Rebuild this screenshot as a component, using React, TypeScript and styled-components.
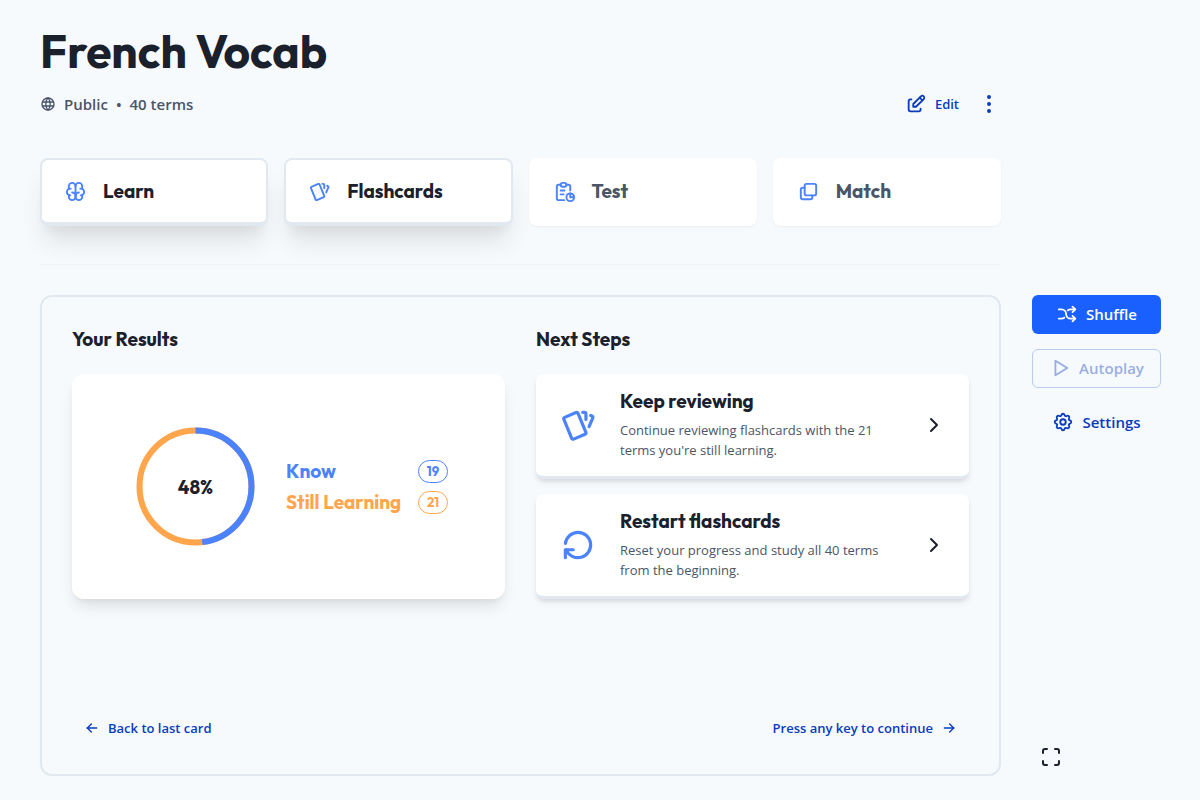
import React from "react";
import styled, { createGlobalStyle, css } from "styled-components";
import {
  TbArrowLeft,
  TbArrowRight,
  TbArrowsShuffle,
  TbBrain,
  TbCards,
  TbChevronRight,
  TbDotsVertical,
  TbEdit,
  TbLayersSubtract,
  TbMaximize,
  TbPlayerPlay,
  TbReload,
  TbReport,
  TbSettings,
  TbWorld,
} from "react-icons/tb";

const color = {
  page: "#f7fafd",
  ink: "#1a202c",
  muted: "#4a5568",
  line: "#e2e8f0",
  blue: "#4b83ff",
  solid: "#1a5fff",
  link: "#0a3bbd",
  orange: "#ffa54c",
};

const heading = `Outfit, Lato, "Open Sans", sans-serif`;

const GlobalStyle = createGlobalStyle`
  *, *::before, *::after { box-sizing: border-box; }
  body {
    margin: 0;
    background: ${color.page};
    color: ${color.ink};
    font-family: "Open Sans", "Noto Sans", sans-serif;
    font-size: 13px;
    line-height: 20px;
  }
  h1, h2, h3, p, dl, dd, dt { margin: 0; }
  button { font: inherit; cursor: pointer; }
  a { color: inherit; text-decoration: none; }
  svg { display: block; flex: none; }
`;

const Page = styled.main`
  display: grid;
  grid-template-columns: minmax(0, 1fr) 129px;
  column-gap: 31px;
  padding: 22px 39px 24px 40px;
`;

const Header = styled.header`
  grid-column: 1;
`;

const Title = styled.h1`
  font: 700 46px/58px ${heading};
`;

const MetaRow = styled.div`
  display: flex;
  align-items: center;
  justify-content: space-between;
  height: 38px;
  margin-top: 5px;
`;

const Meta = styled.div`
  display: flex;
  align-items: center;
  gap: 8px;
  color: ${color.muted};
  font-size: 15px;
  font-weight: 600;
`;

const Actions = styled.div`
  display: flex;
  align-items: center;
  gap: 6px;
`;

const TextButton = styled.button`
  display: flex;
  align-items: center;
  gap: 8px;
  height: 38px;
  padding: 0 12px;
  border: 0;
  background: none;
  color: ${color.link};
  font-size: 13px;
  font-weight: 600;
`;

const IconButton = styled.button<{ $dark?: boolean }>`
  display: grid;
  place-items: center;
  width: 38px;
  height: 38px;
  padding: 0;
  border: 0;
  background: none;
  color: ${(p) => (p.$dark ? color.ink : color.link)};
`;

const MoreButton = styled(IconButton)`
  width: 24px;
`;

const Modes = styled.nav`
  display: grid;
  grid-template-columns: repeat(4, minmax(0, 1fr));
  gap: 16px;
  margin-top: 35px;
  padding-bottom: 38px;
  border-bottom: 1px solid #f0f4f8;
`;

const ModeCard = styled.a<{ $active?: boolean }>`
  display: flex;
  align-items: center;
  gap: 16px;
  height: 68px;
  padding: 0 22px;
  border: 2px solid transparent;
  border-bottom-width: 4px;
  border-radius: 8px;
  background: #fff;
  color: ${color.muted};
  font: 700 19px/26px ${heading};
  box-shadow: 0 1px 2px rgba(0, 0, 0, 0.05);
  svg { color: ${color.blue}; }
  ${(p) =>
    p.$active &&
    css`
      border-color: ${color.line};
      color: ${color.ink};
      box-shadow: 0 20px 25px -5px rgba(0, 0, 0, 0.1), 0 10px 10px -5px rgba(0, 0, 0, 0.04);
    `}
`;

const Panel = styled.section`
  grid-column: 1;
  display: flex;
  flex-direction: column;
  min-height: 481px;
  margin-top: 30px;
  padding: 29px 30px 27px;
  border: 2px solid ${color.line};
  border-radius: 12px;
`;

const Columns = styled.div`
  display: grid;
  grid-template-columns: repeat(2, minmax(0, 1fr));
  gap: 31px;
`;

const Column = styled.div`
  display: flex;
  flex-direction: column;
  gap: 21px;
`;

const SectionTitle = styled.h2`
  font: 700 19px/27px ${heading};
`;

const ResultsCard = styled.div`
  display: flex;
  flex: 1;
  align-items: center;
  justify-content: center;
  gap: 31px;
  padding: 0 57px 0 64px;
  border-radius: 12px;
  background: #fff;
  box-shadow: 0 10px 15px -3px rgba(0, 0, 0, 0.1), 0 4px 6px -2px rgba(0, 0, 0, 0.05);
`;

const Ring = styled.div`
  display: grid;
  place-items: center;
  flex: none;
  > * { grid-area: 1 / 1; }
`;

const RingLabel = styled.span`
  font: 700 19px/24px ${heading};
`;

const Legend = styled.dl`
  display: grid;
  gap: 4px;
  width: 162px;
`;

const LegendRow = styled.div<{ $color: string }>`
  display: flex;
  align-items: center;
  justify-content: space-between;
  height: 27px;
  color: ${(p) => p.$color};
  font: 700 19px/26px ${heading};
  white-space: nowrap;
`;

const Badge = styled.dd`
  width: 30px;
  height: 23px;
  border: 1px solid currentColor;
  border-radius: 12px;
  font: 700 13px/20px ${heading};
  text-align: center;
`;

const Steps = styled.div`
  display: grid;
  gap: 15px;
`;

const StepCard = styled.a`
  display: flex;
  align-items: center;
  height: 105px;
  padding: 0 23px;
  border-bottom: 3px solid ${color.line};
  border-radius: 8px;
  background: #fff;
  box-shadow: 0 4px 6px -1px rgba(0, 0, 0, 0.1), 0 2px 4px -1px rgba(0, 0, 0, 0.06);
`;

const StepIcon = styled.span<{ $flip?: boolean }>`
  color: ${color.blue};
  transform: ${(p) => (p.$flip ? "rotate(180deg)" : "none")};
`;

const StepBody = styled.div`
  flex: 1;
  min-width: 0;
  padding: 0 16px 2px 23px;
`;

const StepTitle = styled.h3`
  font: 700 19px/26px ${heading};
`;

const StepText = styled.p`
  margin-top: 6px;
  color: ${color.muted};
`;

const PanelFooter = styled.div`
  display: flex;
  justify-content: space-between;
  margin-top: auto;
`;

const Side = styled.aside`
  grid-column: 2;
  display: flex;
  flex-direction: column;
  gap: 15px;
  padding-top: 30px;
`;

const SideButton = styled.button<{ $kind: "solid" | "outline" | "ghost" }>`
  display: flex;
  align-items: center;
  justify-content: center;
  gap: 8px;
  height: 39px;
  padding: 0 0 2px;
  border: 1px solid transparent;
  border-radius: 6px;
  background: none;
  color: ${color.link};
  font-size: 15px;
  font-weight: 600;
  ${(p) =>
    p.$kind === "solid" &&
    css`
      background: ${color.solid};
      color: #fff;
    `}
  ${(p) =>
    p.$kind === "outline" &&
    css`
      border-color: #6088e0;
      opacity: 0.4;
    `}
`;

const FullscreenButton = styled(IconButton)`
  margin-top: auto;
`;

const MODES = [
  { label: "Learn", icon: TbBrain, active: true },
  { label: "Flashcards", icon: TbCards, active: true },
  { label: "Test", icon: TbReport, active: false },
  { label: "Match", icon: TbLayersSubtract, active: false },
];

const STEPS = [
  {
    title: "Keep reviewing",
    text: "Continue reviewing flashcards with the 21 terms you're still learning.",
    icon: TbCards,
    flip: false,
  },
  {
    title: "Restart flashcards",
    text: "Reset your progress and study all 40 terms from the beginning.",
    icon: TbReload,
    flip: true,
  },
];

const RADIUS = 56;
const KNOWN = 0.48;

function ProgressRing() {
  const length = 2 * Math.PI * RADIUS;
  return (
    <Ring>
      <svg width="119" height="119" viewBox="0 0 119 119" fill="none" strokeWidth="6" aria-hidden="true">
        <circle cx="59.5" cy="59.5" r={RADIUS} stroke={color.orange} />
        <circle
          cx="59.5"
          cy="59.5"
          r={RADIUS}
          stroke={color.blue}
          strokeDasharray={`${length * KNOWN} ${length}`}
          transform="rotate(-90 59.5 59.5)"
        />
      </svg>
      <RingLabel>48%</RingLabel>
    </Ring>
  );
}

export default function App() {
  return (
    <>
      <GlobalStyle />
      <Page>
        <Header>
          <Title>French Vocab</Title>
          <MetaRow>
            <Meta>
              <TbWorld size={16} />
              <span>Public</span>
              <span>•</span>
              <span>40 terms</span>
            </Meta>
            <Actions>
              <TextButton>
                <TbEdit size={22} />
                Edit
              </TextButton>
              <MoreButton aria-label="More options">
                <TbDotsVertical size={24} />
              </MoreButton>
            </Actions>
          </MetaRow>
          <Modes>
            {MODES.map(({ label, icon: Icon, active }) => (
              <ModeCard key={label} href="#" $active={active}>
                <Icon size={23} />
                {label}
              </ModeCard>
            ))}
          </Modes>
        </Header>
        <Panel>
          <Columns>
            <Column>
              <SectionTitle>Your Results</SectionTitle>
              <ResultsCard>
                <ProgressRing />
                <Legend>
                  <LegendRow $color={color.blue}>
                    <dt>Know</dt>
                    <Badge>19</Badge>
                  </LegendRow>
                  <LegendRow $color={color.orange}>
                    <dt>Still Learning</dt>
                    <Badge>21</Badge>
                  </LegendRow>
                </Legend>
              </ResultsCard>
            </Column>
            <Column>
              <SectionTitle>Next Steps</SectionTitle>
              <Steps>
                {STEPS.map(({ title, text, icon: Icon, flip }) => (
                  <StepCard key={title} href="#">
                    <StepIcon $flip={flip}>
                      <Icon size={38} />
                    </StepIcon>
                    <StepBody>
                      <StepTitle>{title}</StepTitle>
                      <StepText>{text}</StepText>
                    </StepBody>
                    <TbChevronRight size={24} />
                  </StepCard>
                ))}
              </Steps>
            </Column>
          </Columns>
          <PanelFooter>
            <TextButton>
              <TbArrowLeft size={16} />
              Back to last card
            </TextButton>
            <TextButton>
              Press any key to continue
              <TbArrowRight size={16} />
            </TextButton>
          </PanelFooter>
        </Panel>
        <Side>
          <SideButton $kind="solid">
            <TbArrowsShuffle size={22} />
            Shuffle
          </SideButton>
          <SideButton $kind="outline">
            <TbPlayerPlay size={22} />
            Autoplay
          </SideButton>
          <SideButton $kind="ghost">
            <TbSettings size={22} />
            Settings
          </SideButton>
          <FullscreenButton $dark aria-label="Full screen">
            <TbMaximize size={24} />
          </FullscreenButton>
        </Side>
      </Page>
    </>
  );
}
